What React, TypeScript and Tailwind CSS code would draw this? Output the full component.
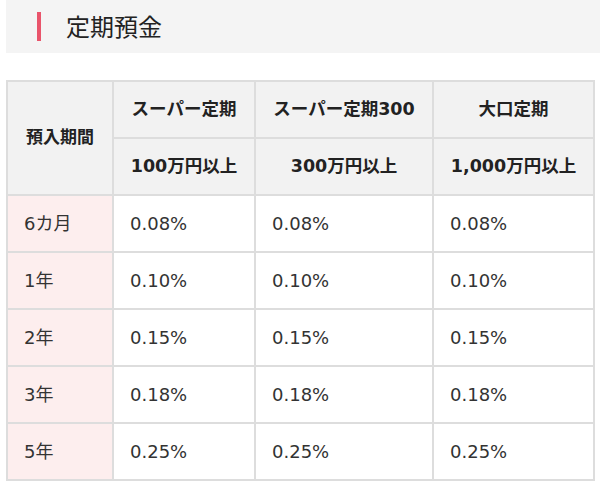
import React from "react";

const font = { fontFamily: '"DejaVu Sans", "Noto Sans CJK JP", sans-serif' };

const rows: [string, string][] = [
  ["6カ月", "0.08%"],
  ["1年", "0.10%"],
  ["2年", "0.15%"],
  ["3年", "0.18%"],
  ["5年", "0.25%"],
];

export default function App() {
  return (
    <div className="w-[600px] h-[482px] bg-white pl-[6px] text-[#333]" style={font}>
      <div className="h-[53px] bg-[#f4f4f4] flex items-center pl-[31px]">
        <div className="w-[4px] h-[29px] bg-[#e9546b]" />
        <div className="ml-[25px] text-[24px] leading-none font-['Noto_Sans_CJK_JP',sans-serif] text-[#222] -mt-[1px]">定期預金</div>
      </div>
      <table className="mt-[27px] w-[587px] border-collapse table-fixed">
        <colgroup>
          <col className="w-[106px]" />
          <col className="w-[142px]" />
          <col className="w-[178px]" />
          <col className="w-[161px]" />
        </colgroup>
        <thead>
          <tr className="h-[57px]">
            <th rowSpan={2} className="border-2 border-[#dddddd] bg-[#f2f2f2] text-[17px] font-bold text-[#222] text-center align-middle p-0">預入期間</th>
            <th className="border-2 border-[#dddddd] bg-[#f2f2f2] text-[17.5px] font-bold text-[#222] text-center align-middle p-0">スーパー定期</th>
            <th className="border-2 border-[#dddddd] bg-[#f2f2f2] text-[17.5px] font-bold text-[#222] text-center align-middle p-0">スーパー定期300</th>
            <th className="border-2 border-[#dddddd] bg-[#f2f2f2] text-[17.5px] font-bold text-[#222] text-center align-middle p-0">大口定期</th>
          </tr>
          <tr className="h-[57px]">
            <th className="border-2 border-[#dddddd] bg-[#f2f2f2] text-[17.5px] font-bold text-[#222] text-center align-middle p-0">100万円以上</th>
            <th className="border-2 border-[#dddddd] bg-[#f2f2f2] text-[17.5px] font-bold text-[#222] text-center align-middle p-0">300万円以上</th>
            <th className="border-2 border-[#dddddd] bg-[#f2f2f2] text-[17.5px] font-bold text-[#222] text-center align-middle p-0">1,000万円以上</th>
          </tr>
        </thead>
        <tbody>
          {rows.map(([term, rate]) => (
            <tr key={term} className="h-[57px]">
              <td className="border-2 border-[#dddddd] bg-[#fdeeee] text-[18px] pl-[16px] align-middle">{term}</td>
              <td className="border-2 border-[#dddddd] bg-white text-[18px] pl-[16px] align-middle">{rate}</td>
              <td className="border-2 border-[#dddddd] bg-white text-[18px] pl-[16px] align-middle">{rate}</td>
              <td className="border-2 border-[#dddddd] bg-white text-[18px] pl-[16px] align-middle">{rate}</td>
            </tr>
          ))}
        </tbody>
      </table>
    </div>
  );
}
